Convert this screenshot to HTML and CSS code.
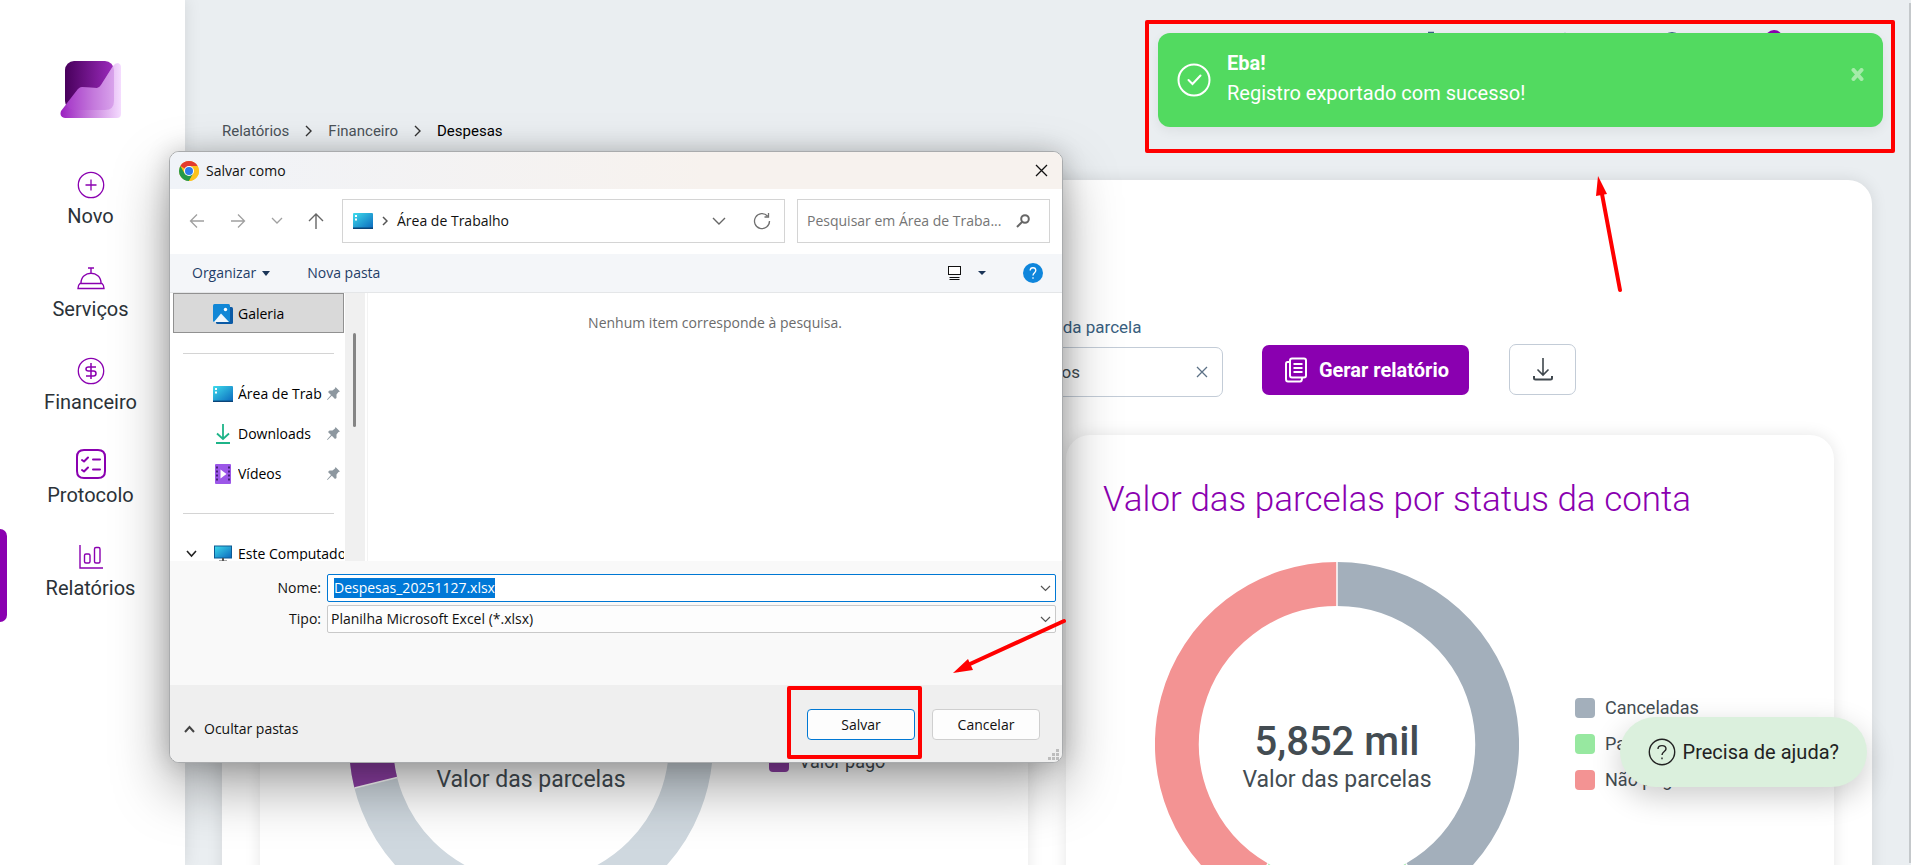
FILE: index.html
```
<!DOCTYPE html>
<html lang="pt-BR">
<head>
    <meta charset="UTF-8">
    <meta name="viewport" content="width=device-width, initial-scale=1.0">
    <title>Despesas</title>
    <link rel="stylesheet" href="styles.css">
</head>
<body>

    <!-- Sidebar -->
    <aside class="sidebar">
        <svg class="logo" width="62" height="58" viewBox="0 0 62 58">
            <defs>
                <linearGradient id="logoDark" x1="0" x2="1">
                    <stop offset="0" stop-color="#48005c"/>
                    <stop offset="1" stop-color="#9c2bbd"/>
                </linearGradient>
                <linearGradient id="logoLight" x1="0" x2="1">
                    <stop offset="0" stop-color="#9a1fc0"/>
                    <stop offset="0.5" stop-color="#c983de"/>
                    <stop offset="1" stop-color="#f5dcff"/>
                </linearGradient>
            </defs>
            <rect x="5" y="0" width="49" height="49" rx="9" fill="url(#logoDark)"/>
            <path d="M18 28 Q20 26 22 26 L37 27 Q39 27 41 24 L53 5 Q55 2 58 2 Q61 3 61 6 L61 53 Q61 57 57 57 L5 57 Q-1 56 1 50 Z" fill="url(#logoLight)"/>
            <path d="M6 43 L18 28 Q20 26 22 26 L37 27 Q39 27 41 24 L53 5 L54 9 L54 40 Q54 49 45 49 L14 49 Q8 48 6 43 Z" fill="#b04fd0" opacity="0.3"/>
        </svg>
        <nav class="menu">
            <a href="#" class="menu-item">
                <svg width="30" height="30" viewBox="0 0 30 30" fill="none" stroke="#8a00b0" stroke-width="1.3">
                    <circle cx="15" cy="15" r="12.7"/>
                    <path d="M15 9.500V20.500M9.500 15H20.500"/>
                </svg>
                Novo
            </a>
            <a href="#" class="menu-item">
                <svg width="30" height="30" viewBox="0 0 30 30" fill="none" stroke="#8a00b0" stroke-width="1.4">
                    <path d="M12 5H18M15 5V10M5 20C5 7 25 7 25 20M4 20.500H26Q28 22 28 25.500H2Q2 22 4 20.500Z"/>
                </svg>
                Serviços
            </a>
            <a href="#" class="menu-item">
                <svg width="30" height="30" viewBox="0 0 30 30" fill="none" stroke="#8a00b0" stroke-width="1.3">
                    <circle cx="15" cy="15" r="12.7"/>
                    <path d="M20 11H12.500Q10 11 10 13Q10 15 12.500 15H17.500Q20 15 20 17.500Q20 20 17.500 20H10M15 7V23" stroke-width="1.5"/>
                </svg>
                Financeiro
            </a>
            <a href="#" class="menu-item">
                <svg width="30" height="30" viewBox="0 0 30 30" fill="none" stroke="#8a00b0" stroke-width="2" stroke-linecap="round" stroke-linejoin="round">
                    <path d="M8 1H22Q29 1 29 8V22Q29 29 22 29H8Q1 29 1 22V8Q1 1 8 1Z"/>
                    <path d="M6 11L8 12.500L12 8.500M6 21L8 22.500L12 18.500M17 10.500H24M17 20.500H24"/>
                </svg>
                Protocolo
            </a>
            <a href="#" class="menu-item active">
                <svg width="30" height="30" viewBox="0 0 30 30" fill="none" stroke="#8a00b0" stroke-width="1.4">
                    <path d="M4 3V26H27"/>
                    <rect x="8.500" y="12" width="5.500" height="9" rx="1.500"/>
                    <rect x="18.500" y="5.500" width="5.500" height="15.500" rx="1.500"/>
                </svg>
                Relatórios
            </a>
        </nav>
    </aside>

    <!-- Page -->
    <main class="page">
        <header class="topbar">
            <svg width="364" height="30" viewBox="0 0 364 30" fill="none" stroke="#3a6288" stroke-width="2">
                <path d="M9 3H15" stroke-width="2.500"/>
                <path d="M4 22V13C4 4 20 4 20 13V22Z"/>
                <path d="M146 2V28" stroke="#c3ccd7" stroke-width="1"/>
                <circle cx="253" cy="12" r="9"/>
                <circle cx="355" cy="9" r="9" fill="#8a00b0" stroke="none"/>
            </svg>
        </header>

        <nav class="breadcrumb">
            <a href="#">Relatórios</a>
            <svg width="7" height="12" viewBox="0 0 7 12"><path d="M1 1L6 6L1 11" fill="none" stroke="#333" stroke-width="1.400"/></svg>
            <a href="#">Financeiro</a>
            <svg width="7" height="12" viewBox="0 0 7 12"><path d="M1 1L6 6L1 11" fill="none" stroke="#333" stroke-width="1.400"/></svg>
            <span class="current">Despesas</span>
        </nav>

        <section class="panel">
            <form class="filters">
                <div class="field">
                    <label for="statusParcela">Status da parcela</label>
                    <div class="field-box">
                        <input type="text" id="statusParcela" value="Todos">
                        <button type="button" class="clear" aria-label="Limpar">
                            <svg width="12" height="12" viewBox="0 0 12 12"><path d="M1 1L11 11M11 1L1 11" stroke="#5c7186" stroke-width="1.300"/></svg>
                        </button>
                    </div>
                </div>
                <button type="button" class="btn-report">
                    <svg width="22" height="26" viewBox="0 0 22 26" fill="none" stroke="#fff" stroke-width="2" stroke-linejoin="round">
                        <rect x="5" y="1.500" width="16" height="19" rx="2"/>
                        <path d="M5 5H2.500Q1 5 1 7V22Q1 24.500 3 24.500H15Q17 24.500 17 21"/>
                        <path d="M8.500 7H17.500M8.500 11H17.500M8.500 15H17.500" stroke-width="1.800"/>
                    </svg>
                    Gerar relatório
                </button>
                <button type="button" class="btn-download" aria-label="Baixar">
                    <svg width="20" height="23" viewBox="0 0 20 23" fill="none" stroke="#3f474d">
                        <path d="M10 0V16M4.500 11.500L10 17L15.500 11.500" stroke-width="1.600"/>
                        <path d="M1 18V20Q1 21.500 2.500 21.500H17.500Q19 21.500 19 20V18" stroke-width="2"/>
                    </svg>
                </button>
            </form>

            <div class="cards">
                <article class="card">
                    <h2>Valor das parcelas por período</h2>
                    <div class="chart">
                        <svg width="364" height="364" viewBox="-182 -182 364 364">
                            <circle r="160" fill="none" stroke="#cfd8df" stroke-width="44"/>
                            <path d="M-155.200 38.700A160 160 0 0 1 0 -160" fill="none" stroke="#8e3fa5" stroke-width="44"/>
                            <path d="M-176.600 44L-133.900 33.400" stroke="#fff" stroke-width="1.500"/>
                            <text class="total" y="11">5,852 mil</text>
                            <text class="caption" y="43">Valor das parcelas</text>
                        </svg>
                        <ul class="legend">
                            <li><span class="swatch light"></span>Valor total</li>
                            <li><span class="swatch purple"></span>Valor pago</li>
                        </ul>
                    </div>
                </article>
                <article class="card">
                    <h2>Valor das parcelas por status da conta</h2>
                    <div class="chart">
                        <svg width="364" height="364" viewBox="-182 -182 364 364">
                            <path d="M0 -160A160 160 0 0 1 80 138.600" fill="none" stroke="#a3afbb" stroke-width="44"/>
                            <path d="M80 138.600A160 160 0 0 1 -80 138.600" fill="none" stroke="#97e8a0" stroke-width="44"/>
                            <path d="M-80 138.600A160 160 0 0 1 0 -160" fill="none" stroke="#f39393" stroke-width="44"/>
                            <path d="M0 -182V-138M69 119.500L91 157.600M-69 119.500L-91 157.600" stroke="#fff" stroke-width="1.500"/>
                            <text class="total" y="11">5,852 mil</text>
                            <text class="caption" y="43">Valor das parcelas</text>
                        </svg>
                        <ul class="legend">
                            <li><span class="swatch gray"></span>Canceladas</li>
                            <li><span class="swatch green"></span>Pagas</li>
                            <li><span class="swatch red"></span>Não pagas</li>
                        </ul>
                    </div>
                </article>
            </div>
        </section>
    </main>

    <div class="scroll-thumb"></div>

    <button class="help">
        <svg width="28" height="28" viewBox="0 0 28 28" fill="none" stroke="#222" stroke-width="1.400">
            <circle cx="14" cy="14" r="12.700"/>
            <path d="M10 11C10 6.500 18 6.500 18 11C18 13.500 14 13.500 14 17"/>
            <path d="M14 19.500V21.200"/>
        </svg>
        Precisa de ajuda?
    </button>

    <!-- Success toast -->
    <div class="toast" role="status">
        <svg width="34" height="34" viewBox="0 0 34 34" fill="none" stroke="#fff" stroke-width="2">
            <circle cx="17" cy="17" r="15.500"/>
            <path d="M11.500 17L15.500 21L23.500 12.500" stroke-linecap="round"/>
        </svg>
        <div class="toast-text">
            <strong>Eba!</strong>
            <span>Registro exportado com sucesso!</span>
        </div>
        <button class="toast-close" aria-label="Fechar">
            <svg width="13" height="13" viewBox="0 0 13 13"><path d="M2.500 2L10.500 11M10.500 2L2.500 11" stroke="#a5eba9" stroke-width="4" stroke-linecap="round"/></svg>
        </button>
    </div>

    <!-- Save dialog -->
    <div class="dialog" role="dialog" aria-labelledby="dialogTitle">
        <div class="title-bar">
            <svg width="20" height="20" viewBox="0 0 20 20">
                <circle cx="10" cy="10" r="10" fill="#fcc21b"/>
                <path d="M10 10L1.340 5A10 10 0 0 1 18.660 5Z" fill="#e33b2e"/>
                <path d="M1.340 5A10 10 0 0 0 10 20L14.330 12.500L10 10L5.670 12.500Z" fill="#23994a"/>
                <path d="M10 5H18.660A10 10 0 0 1 10 20L14.330 12.500Z" fill="#fcc21b"/>
                <circle cx="10" cy="10" r="5" fill="#fff"/>
                <circle cx="10" cy="10" r="4" fill="#2d7bea"/>
            </svg>
            <span id="dialogTitle">Salvar como</span>
            <button class="icon-btn close" aria-label="Fechar">
                <svg width="13" height="13" viewBox="0 0 13 13"><path d="M1 1L12 12M12 1L1 12" stroke="#111" stroke-width="1.300"/></svg>
            </button>
        </div>

        <div class="nav-row">
            <div class="nav-buttons">
                <button class="icon-btn" aria-label="Voltar">
                    <svg width="16" height="16" viewBox="0 0 16 16" fill="none" stroke="#a0a0a0" stroke-width="1.300"><path d="M15 8H1.500M8 1.500L1.500 8L8 14.500"/></svg>
                </button>
                <button class="icon-btn" aria-label="Avançar">
                    <svg width="16" height="16" viewBox="0 0 16 16" fill="none" stroke="#a0a0a0" stroke-width="1.300"><path d="M1 8H14.500M8 1.500L14.500 8L8 14.500"/></svg>
                </button>
                <button class="icon-btn" aria-label="Locais recentes">
                    <svg width="12" height="16" viewBox="0 0 12 16" fill="none" stroke="#a0a0a0" stroke-width="1.300"><path d="M1 5L6 10L11 5"/></svg>
                </button>
                <button class="icon-btn" aria-label="Acima">
                    <svg width="16" height="16" viewBox="0 0 16 16" fill="none" stroke="#666" stroke-width="1.400"><path d="M8 16V1M1 8L8 1L15 8"/></svg>
                </button>
            </div>
            <div class="address">
                <svg width="20" height="16" viewBox="0 0 20 16">
                    <defs>
                        <linearGradient id="desk" x1="0" y1="0" x2="1" y2="1">
                            <stop offset="0" stop-color="#3fdcec"/>
                            <stop offset="1" stop-color="#0a67bd"/>
                        </linearGradient>
                    </defs>
                    <rect width="20" height="16" rx="1" fill="url(#desk)"/>
                    <path d="M0 15.300H20" stroke="#0b4478" stroke-width="1.400"/>
                    <path d="M2 2H4V4H2ZM2 5.500H4V7.500H2Z" fill="#fff"/>
                </svg>
                <svg width="6" height="10" viewBox="0 0 6 10"><path d="M1 1L5 5L1 9" fill="none" stroke="#555" stroke-width="1.500"/></svg>
                <span class="address-text">Área de Trabalho</span>
                <button class="icon-btn" aria-label="Histórico">
                    <svg width="14" height="8" viewBox="0 0 14 8"><path d="M1 1L7 7L13 1" fill="none" stroke="#666" stroke-width="1.400"/></svg>
                </button>
                <button class="icon-btn" aria-label="Atualizar">
                    <svg width="18" height="18" viewBox="0 0 18 18" fill="none" stroke="#707070" stroke-width="1.300"><path d="M16.500 9A7.500 7.500 0 1 1 14.500 4M15.500 1V5H11.500"/></svg>
                </button>
            </div>
            <div class="search">
                <input type="text" aria-label="Pesquisar" placeholder="Pesquisar em Área de Traba...">
                <svg width="14" height="14" viewBox="0 0 14 14" fill="none" stroke="#666" stroke-width="2"><circle cx="9" cy="5" r="3.800"/><path d="M6.500 7.500L1 13"/></svg>
            </div>
        </div>

        <div class="toolbar">
            <button class="tool">Organizar <svg width="8" height="5" viewBox="0 0 8 5"><path d="M0 0H8L4 5Z" fill="#1b3558"/></svg></button>
            <button class="tool">Nova pasta</button>
            <button class="tool view" aria-label="Exibição">
                <svg width="13" height="15" viewBox="0 0 13 15" fill="none" stroke="#111"><rect x="0.500" y="0.500" width="12" height="8" fill="#fff"/><path d="M1.500 11.500H11.500M1.500 13.500H11.500"/></svg>
                <svg width="8" height="4" viewBox="0 0 8 4"><path d="M0 0H8L4 4Z" fill="#1b3558"/></svg>
            </button>
            <button class="icon-btn" aria-label="Ajuda">
                <svg width="20" height="20" viewBox="0 0 20 20"><circle cx="10" cy="10" r="10" fill="#0f86dc"/><path d="M7.200 7.500C7.200 3.800 12.800 3.800 12.800 7.500C12.800 9.700 10 9.700 10 12.500M10 14.200V15.800" fill="none" stroke="#fff" stroke-width="1.300"/></svg>
            </button>
        </div>

        <div class="browser">
            <ul class="tree">
                <li class="selected">
                    <svg width="20" height="20" viewBox="0 0 20 20"><rect x="3" y="3" width="17" height="17" rx="1.500" fill="#0b5aa5"/><rect width="17" height="18" rx="1.500" fill="#1187d6"/><path d="M1 18L8 9.500L16 18Z" fill="#eef7fd"/><circle cx="12.500" cy="5.500" r="1.700" fill="#fff"/></svg>
                    <span>Galeria</span>
                </li>
                <li class="separator"></li>
                <li>
                    <svg width="20" height="16" viewBox="0 0 20 16"><rect width="20" height="16" rx="1" fill="url(#desk)"/><path d="M0 15.300H20" stroke="#0b4478" stroke-width="1.400"/><path d="M2 2H4V4H2ZM2 5.500H4V7.500H2Z" fill="#fff"/></svg>
                    <span>Área de Trabalho</span>
                    <svg class="pin" width="13" height="13" viewBox="0 0 13 13"><path d="M8.500 0L13 4.500L11.500 5L9.500 7.500V11L8 12L4.800 8.800L.5 13L0 12.500L4 8L1 5L2.500 3.500H5.500L8 1.500Z" fill="#8d979f"/></svg>
                </li>
                <li>
                    <svg width="20" height="20" viewBox="0 0 20 20" fill="none" stroke="#1db488" stroke-width="1.800"><path d="M10 0V15M4 9.500L10 15L16 9.500M3 19H17"/></svg>
                    <span>Downloads</span>
                    <svg class="pin" width="13" height="13" viewBox="0 0 13 13"><path d="M8.500 0L13 4.500L11.500 5L9.500 7.500V11L8 12L4.800 8.800L.5 13L0 12.500L4 8L1 5L2.500 3.500H5.500L8 1.500Z" fill="#8d979f"/></svg>
                </li>
                <li>
                    <svg width="20" height="20" viewBox="0 0 20 20"><rect x="2" width="16" height="20" rx="1" fill="#9c57e8"/><path d="M4 2.500V18M16 2.500V18" stroke="#45207a" stroke-width="2" stroke-dasharray="2 2"/><path d="M7.500 5.500L13.500 10L7.500 14.500Z" fill="#fff"/></svg>
                    <span>Vídeos</span>
                    <svg class="pin" width="13" height="13" viewBox="0 0 13 13"><path d="M8.500 0L13 4.500L11.500 5L9.500 7.500V11L8 12L4.800 8.800L.5 13L0 12.500L4 8L1 5L2.500 3.500H5.500L8 1.500Z" fill="#8d979f"/></svg>
                </li>
                <li class="separator"></li>
                <li class="computer">
                    <svg class="expand" width="11" height="8" viewBox="0 0 11 8"><path d="M1 1L5.500 6L10 1" fill="none" stroke="#222" stroke-width="1.600"/></svg>
                    <svg width="20" height="18" viewBox="0 0 20 18"><rect x="1.500" y="1" width="17" height="12" fill="url(#desk)" stroke="#0d5a94"/><path d="M10 13V16M6 16.500H14" stroke="#555" stroke-width="2"/></svg>
                    <span>Este Computador</span>
                </li>
            </ul>
            <div class="tree-scroll"><div class="tree-thumb"></div></div>
            <div class="files">Nenhum item corresponde à pesquisa.</div>
        </div>

        <div class="file-form">
            <label for="fileName">Nome:</label>
            <div class="combo focused">
                <input type="text" id="fileName" value="Despesas_20251127.xlsx">
                <svg width="11" height="7" viewBox="0 0 11 7"><path d="M1 1L5.500 5.500L10 1" fill="none" stroke="#555" stroke-width="1.200"/></svg>
            </div>
            <label for="fileType">Tipo:</label>
            <div class="combo">
                <select id="fileType"><option>Planilha Microsoft Excel (*.xlsx)</option></select>
                <svg width="11" height="7" viewBox="0 0 11 7"><path d="M1 1L5.500 5.500L10 1" fill="none" stroke="#555" stroke-width="1.200"/></svg>
            </div>
        </div>

        <div class="dialog-footer">
            <button class="hide-folders">
                <svg width="11" height="8" viewBox="0 0 11 8"><path d="M1 7L5.500 2L10 7" fill="none" stroke="#444" stroke-width="2"/></svg>
                Ocultar pastas
            </button>
            <button class="dlg-btn primary">Salvar</button>
            <button class="dlg-btn">Cancelar</button>
            <svg class="grip" width="11" height="11" viewBox="0 0 11 11"><path d="M8 0H11V3H8ZM4 4H7V7H4ZM8 4H11V7H8ZM0 8H3V11H0ZM4 8H7V11H4ZM8 8H11V11H8Z" fill="#bdbdbd"/></svg>
        </div>
    </div>

    <!-- Red marks over the toast and the save button -->
    <svg class="marks" fill="none" stroke="#ff0000" stroke-width="4" stroke-linejoin="round" stroke-linecap="round">
        <rect x="1147" y="22" width="746" height="129"/>
        <rect x="789" y="688" width="131" height="69"/>
        <path d="M1620 290L1602 194M1064 621L970 664"/>
        <path d="M1598 176L1596 196L1607 194ZM953 673L968 659L973 670Z" fill="#ff0000" stroke="none"/>
    </svg>

</body>
</html>
```

FILE: styles.css
```
* {
    box-sizing: border-box;
}

body {
    margin: 0;
    height: 100vh;
    display: flex;
    overflow: hidden;
    position: relative;
    background: #eaeef1;
    font-family: Roboto, sans-serif;
    color: #434c52;
}

button,
input,
select {
    font: inherit;
    color: inherit;
    border: none;
    background: none;
    padding: 0;
    margin: 0;
    outline: none;
}

button {
    cursor: pointer;
}

svg {
    display: block;
    flex-shrink: 0;
}

a {
    color: inherit;
    text-decoration: none;
}

ul {
    list-style: none;
    margin: 0;
    padding: 0;
}

/* Sidebar */
.sidebar {
    width: 185px;
    flex-shrink: 0;
    background: #fff;
    padding-top: 61px;
    box-shadow: 0 0 16px rgba(0, 0, 0, 0.1);
}

.logo {
    margin: 0 auto 38px 60px;
}

.menu-item {
    display: flex;
    flex-direction: column;
    align-items: center;
    height: 93px;
    padding: 13px 4px 0 0;
    font-size: 20px;
    line-height: 32px;
    color: #2b3238;
}

.menu-item.active {
    position: relative;
}

.menu-item.active::before {
    content: "";
    position: absolute;
    left: 0;
    top: 0;
    width: 7px;
    height: 100%;
    background: #8a00b0;
    border-radius: 0 7px 7px 0;
}

/* Page */
.page {
    flex: 1;
    min-width: 0;
    display: flex;
    flex-direction: column;
    padding: 0 39px 0 37px;
}

.topbar {
    display: flex;
    flex-shrink: 0;
    justify-content: flex-end;
    height: 119px;
    padding: 30px 89px 0 0;
}

.breadcrumb {
    display: flex;
    flex-shrink: 0;
    align-items: center;
    gap: 16px;
    height: 24px;
    font-size: 15px;
    color: #4b5359;
}

.breadcrumb .current {
    color: #000;
}

.panel {
    flex: 1 0 auto;
    margin-top: 37px;
    padding: 137px 38px 0;
    background: #fff;
    border-radius: 24px 24px 0 0;
    box-shadow: 0 0 16px rgba(0, 0, 0, 0.1);
}

.filters {
    display: flex;
    justify-content: flex-end;
    align-items: flex-end;
    padding-right: 258px;
    height: 80px;
}

.field {
    width: 213px;
    margin-right: 39px;
    font-size: 17px;
}

.field label {
    display: block;
    line-height: 20px;
    margin-bottom: 10px;
    color: #3a5f80;
}

.field-box {
    display: flex;
    align-items: center;
    height: 50px;
    padding: 0 14px 0 22px;
    border: 1px solid #c3ccd7;
    border-radius: 7px;
}

.field-box input {
    flex: 1;
    min-width: 0;
}

.btn-report {
    display: flex;
    align-items: center;
    gap: 12px;
    height: 50px;
    padding: 0 20px 0 23px;
    margin: 0 40px 2px 0;
    border-radius: 7px;
    background: #8a00b0;
    color: #fff;
    font-size: 20px;
    font-weight: 700;
}

.btn-download {
    display: flex;
    align-items: center;
    justify-content: center;
    width: 67px;
    height: 51px;
    margin-bottom: 2px;
    border: 1px solid #c3ccd7;
    border-radius: 7px;
}

.cards {
    display: flex;
    gap: 38px;
    margin-top: 38px;
}

.card {
    flex: 1;
    height: 500px;
    padding: 44px 37px 0;
    border-radius: 24px;
    background: #fff;
    box-shadow: 0 0 16px rgba(0, 0, 0, 0.1);
}

.card h2 {
    margin: 0;
    font-size: 35px;
    line-height: 42px;
    font-weight: 300;
    color: #8a00b0;
}

.chart {
    display: flex;
    align-items: center;
    gap: 56px;
    margin-top: 41px;
    padding-left: 52px;
}

.chart text {
    text-anchor: middle;
    fill: #434c52;
}

.chart .total {
    font-size: 40px;
    font-weight: 500;
}

.chart .caption {
    font-size: 23px;
}

.legend {
    display: flex;
    flex-direction: column;
    gap: 16px;
    font-size: 18px;
    line-height: 20px;
}

.legend li {
    display: flex;
    gap: 10px;
    white-space: nowrap;
}

.swatch {
    width: 20px;
    height: 20px;
    border-radius: 4px;
}

.swatch.light { background: #cfd8df; }
.swatch.purple { background: #8e3fa5; }
.swatch.gray { background: #a3afbb; }
.swatch.green { background: #97e8a0; }
.swatch.red { background: #f39393; }

.scroll-thumb {
    position: absolute;
    top: 3px;
    right: 0;
    bottom: 2px;
    width: 2px;
    background: #c4c8cb;
}

.help {
    position: absolute;
    right: 44px;
    bottom: 78px;
    display: flex;
    align-items: center;
    gap: 7px;
    height: 70px;
    padding: 0 28px;
    border-radius: 35px;
    background: #dbf0dd;
    color: #222;
    font-size: 20px;
    box-shadow: 0 10px 30px rgba(0, 0, 0, 0.2);
}

/* Toast */
.toast {
    position: absolute;
    top: 33px;
    right: 28px;
    width: 725px;
    height: 94px;
    display: flex;
    align-items: center;
    gap: 16px;
    padding: 0 19px;
    border-radius: 12px;
    background: #52da60;
    color: #fff;
    font-size: 20px;
    line-height: 30px;
    box-shadow: 0 4px 12px rgba(0, 0, 0, 0.06);
}

.toast-text {
    display: flex;
    flex-direction: column;
    padding-bottom: 4px;
}

.toast-close {
    margin: 0 0 12px auto;
}

/* Save dialog */
.dialog {
    position: absolute;
    left: 169px;
    top: 151px;
    width: 894px;
    border: 1px solid #a9abad;
    border-radius: 10px;
    overflow: hidden;
    background: #fff;
    color: #111;
    font-family: "Open Sans", sans-serif;
    font-size: 14px;
    line-height: 20px;
    box-shadow: 0 24px 56px rgba(0, 0, 0, 0.36), 0 0 24px rgba(0, 0, 0, 0.18);
}

.icon-btn {
    display: flex;
    align-items: center;
    justify-content: center;
}

.title-bar {
    display: flex;
    align-items: center;
    gap: 7px;
    height: 37px;
    padding: 0 14px 0 9px;
    background: linear-gradient(90deg, #f0f3f8, #f7f2ee 60%);
}

.title-bar .close {
    margin-left: auto;
}

.nav-row {
    display: flex;
    align-items: center;
    gap: 12px;
    height: 65px;
    padding: 0 12px 1px 19px;
}

.nav-buttons {
    display: flex;
    gap: 25px;
    width: 141px;
}

.address,
.search {
    display: flex;
    align-items: center;
    height: 44px;
    border: 1px solid #d4d4d4;
}

.address {
    flex: 1;
    gap: 9px;
    padding: 0 13px 0 10px;
}

.address-text {
    flex: 1;
}

.address .icon-btn {
    margin-left: 18px;
}

.search {
    width: 253px;
    padding: 0 19px 0 9px;
}

.search input {
    flex: 1;
    min-width: 0;
}

.search input::placeholder {
    color: #757575;
    opacity: 1;
}

.toolbar {
    display: flex;
    align-items: center;
    gap: 37px;
    height: 39px;
    padding: 0 19px 0 22px;
    background: #f4f6f9;
    border-bottom: 1px solid #e4e6e8;
}

.tool {
    display: flex;
    align-items: center;
    gap: 6px;
    color: #1f3e68;
}

.tool.view {
    gap: 17px;
    margin-left: auto;
}

.browser {
    display: flex;
    height: 268px;
}

.tree {
    width: 175px;
    padding: 0 1px 0 3px;
    overflow: hidden;
    color: #000;
}

.tree li {
    display: flex;
    align-items: center;
    gap: 5px;
    height: 40px;
    padding: 1px 4px 0 40px;
}

.tree span {
    flex: 1;
    overflow: hidden;
    white-space: nowrap;
}

.tree li.selected {
    padding-left: 39px;
    background: #d9d9d9;
    border: 1px solid #919191;
}

.tree li.separator::before {
    content: "";
    width: 151px;
    height: 1px;
    margin-left: -30px;
    flex-shrink: 0;
    background: #d4d4d4;
}

.tree li.computer {
    padding: 1px 0 0 13px;
}

.tree .expand {
    margin-right: 11px;
}

.tree-scroll {
    width: 20px;
    padding: 40px 8px 0;
    background: #f0f0f0;
}

.tree-thumb {
    width: 3px;
    height: 94px;
    border-radius: 2px;
    background: #858585;
}

.files {
    flex: 1;
    margin-left: 2px;
    padding-top: 20px;
    border-left: 1px solid #f3f3f3;
    text-align: center;
    color: #6b6b6b;
}

.file-form {
    display: grid;
    grid-template-columns: 151px 1fr;
    gap: 3px 6px;
    align-content: start;
    align-items: center;
    height: 124px;
    padding: 13px 6px 0 0;
    background: #f9f9f9;
}

.file-form label {
    text-align: right;
}

.combo {
    display: flex;
    align-items: center;
    justify-content: space-between;
    height: 28px;
    padding: 0 4px 0 3px;
    background: #fdfdfd;
    border: 1px solid #c9c9c9;
    border-radius: 2px;
}

.combo select {
    flex: 1;
    appearance: none;
}

.combo.focused {
    padding-left: 6px;
    background: #fff;
    border-color: #0078d4;
}

.combo.focused input {
    field-sizing: content;
    height: 20px;
    background: #0078d7;
    color: #fff;
}

.dialog-footer {
    position: relative;
    display: flex;
    align-items: center;
    gap: 17px;
    height: 77px;
    padding: 2px 22px 0 14px;
    background: #efefef;
}

.hide-folders {
    display: flex;
    align-items: center;
    gap: 9px;
    margin: 8px auto 0 0;
}

.dlg-btn {
    width: 108px;
    height: 31px;
    border: 1px solid #cfcfcf;
    border-radius: 4px;
    background: #fdfdfd;
}

.dlg-btn.primary {
    border-color: #0078d4;
}

.grip {
    position: absolute;
    right: 3px;
    bottom: 2px;
}

.marks {
    position: absolute;
    inset: 0;
    width: 100%;
    height: 100%;
    pointer-events: none;
}
```
